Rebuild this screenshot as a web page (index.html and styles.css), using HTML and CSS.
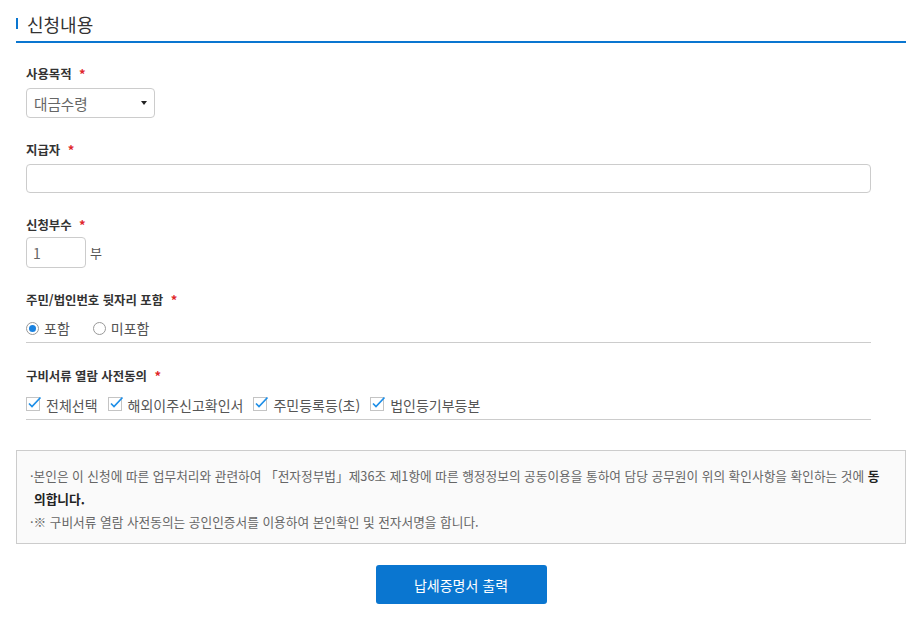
FILE: index.html
```html
<!DOCTYPE html>
<html lang="ko">
<head>
<meta charset="utf-8">
<title>신청내용</title>
<link rel="stylesheet" href="styles.css">
</head>
<body>
<div class="page">
  <h2 class="section-title"><span class="bar"></span>신청내용</h2>
  <div class="form">
    <div class="field">
      <div class="label">사용목적 <span class="req">*</span></div>
      <div class="select"><span>대금수령</span><span class="caret"></span></div>
    </div>
    <div class="field">
      <div class="label">지급자 <span class="req">*</span></div>
      <div class="input wide"></div>
    </div>
    <div class="field">
      <div class="label">신청부수 <span class="req">*</span></div>
      <div class="count-row"><div class="input small">1</div><span class="unit">부</span></div>
    </div>
    <div class="field opts">
      <div class="label">주민/법인번호 뒷자리 포함 <span class="req">*</span></div>
      <div class="option-row radios">
        <span class="opt"><span class="radio on"></span>포함</span>
        <span class="opt"><span class="radio"></span>미포함</span>
      </div>
    </div>
    <div class="field opts">
      <div class="label">구비서류 열람 사전동의 <span class="req">*</span></div>
      <div class="option-row checks">
        <span class="opt"><svg class="cb" viewBox="0 0 16 16" width="16" height="16"><rect x="0.5" y="2.5" width="13" height="13" fill="#fff" stroke="#c4c4c4"/><path d="M3 8.5 L6 11.5 L14.5 2.5" fill="none" stroke="#1e8fe8" stroke-width="1.7"/></svg>전체선택</span>
        <span class="opt"><svg class="cb" viewBox="0 0 16 16" width="16" height="16"><rect x="0.5" y="2.5" width="13" height="13" fill="#fff" stroke="#c4c4c4"/><path d="M3 8.5 L6 11.5 L14.5 2.5" fill="none" stroke="#1e8fe8" stroke-width="1.7"/></svg>해외이주신고확인서</span>
        <span class="opt"><svg class="cb" viewBox="0 0 16 16" width="16" height="16"><rect x="0.5" y="2.5" width="13" height="13" fill="#fff" stroke="#c4c4c4"/><path d="M3 8.5 L6 11.5 L14.5 2.5" fill="none" stroke="#1e8fe8" stroke-width="1.7"/></svg>주민등록등(초)</span>
        <span class="opt"><svg class="cb" viewBox="0 0 16 16" width="16" height="16"><rect x="0.5" y="2.5" width="13" height="13" fill="#fff" stroke="#c4c4c4"/><path d="M3 8.5 L6 11.5 L14.5 2.5" fill="none" stroke="#1e8fe8" stroke-width="1.7"/></svg>법인등기부등본</span>
      </div>
    </div>
  </div>
  <div class="notice">
    <p>·본인은 이 신청에 따른 업무처리와 관련하여 「전자정부법」제36조 제1항에 따른 행정정보의 공동이용을 통하여 담당 공무원이 위의 확인사항을 확인하는 것에 <b>동</b><br><b>의합니다.</b></p>
    <p>·※ 구비서류 열람 사전동의는 공인인증서를 이용하여 본인확인 및 전자서명을 합니다.</p>
  </div>
  <div class="actions"><button class="btn">납세증명서 출력</button></div>
</div>
</body>
</html>
```

FILE: styles.css
```css
* { box-sizing: border-box; }
body {
  margin: 0;
  background: #fff;
  font-family: "Noto Sans CJK KR", "Noto Sans", sans-serif;
  color: #333;
}
.page {
  padding: 0 14px 0 16px;
}
.section-title {
  margin: 0;
  height: 43px;
  display: flex;
  align-items: center;
  padding-top: 6px;
  font-size: 18px;
  font-weight: 400;
  color: #333;
  border-bottom: 2px solid #0a76d0;
}
.bar {
  display: inline-block;
  width: 2px;
  height: 11px;
  background: #0a76d0;
  margin-right: 9px;
}
.form {
  padding: 21px 35px 0 10px;
}
.field {
  margin-bottom: 22px;
}
.field.opts { margin-bottom: 23px; }
.label {
  height: 20px;
  line-height: 20px;
  font-size: 12.4px;
  font-weight: 700;
  color: #333;
  margin-bottom: 4px;
}
.req {
  color: #e0262b;
  margin-left: 4px;
  font-size: 13px;
}
.select {
  width: 129px;
  height: 30px;
  border: 1px solid #ccc;
  border-radius: 4px;
  display: flex;
  align-items: center;
  justify-content: space-between;
  padding: 0 7px 0 7px;
  font-size: 14.6px;
  color: #666;
}
.caret {
  width: 0;
  height: 0;
  border-left: 3px solid transparent;
  border-right: 3px solid transparent;
  border-top: 4px solid #222;
}
.input {
  height: 30px;
  border: 1px solid #ccc;
  border-radius: 4px;
  font-size: 14px;
  color: #666;
  display: flex;
  align-items: center;
  padding-left: 6px;
}
.input.wide { width: 845px; height: 29px; }
.count-row {
  display: flex;
  align-items: center;
  margin-top: -2px;
}
.input.small { width: 60px; height: 31px; }
.unit {
  font-size: 13px;
  color: #555;
  margin-left: 4px;
}
.option-row {
  display: flex;
  align-items: center;
  height: 29px;
  border-bottom: 1px solid #ccc;
  font-size: 14px;
  color: #555;
}
.option-row.checks { height: 30px; }
.radios { gap: 23px; }
.checks { gap: 10px; }
.opt {
  display: inline-flex;
  align-items: center;
}
.radio {
  width: 13px;
  height: 13px;
  border: 1px solid #999;
  border-radius: 50%;
  margin-right: 5px;
  position: relative;
  display: inline-block;
}
.radio.on::after {
  content: "";
  position: absolute;
  left: 2px;
  top: 2px;
  width: 7px;
  height: 7px;
  border-radius: 50%;
  background: #1a82e0;
}
.cb {
  margin-right: 4px;
  margin-top: -3px;
}
.notice {
  margin-top: 30px;
  border: 1px solid #ccc;
  background: #fafafa;
  padding: 13px 15px 10px 13px;
  font-size: 12.7px;
  line-height: 23px;
  color: #666;
}
.notice p {
  margin: 0;
  padding-left: 4px;
  text-indent: -4px;
}
.notice b { color: #222; }
.actions {
  display: flex;
  justify-content: center;
  padding-top: 21px;
}
.btn {
  width: 171px;
  height: 39px;
  border: 0;
  border-radius: 3px;
  background: #0a76d0;
  color: #fff;
  font-family: inherit;
  font-size: 14px;
}
```
